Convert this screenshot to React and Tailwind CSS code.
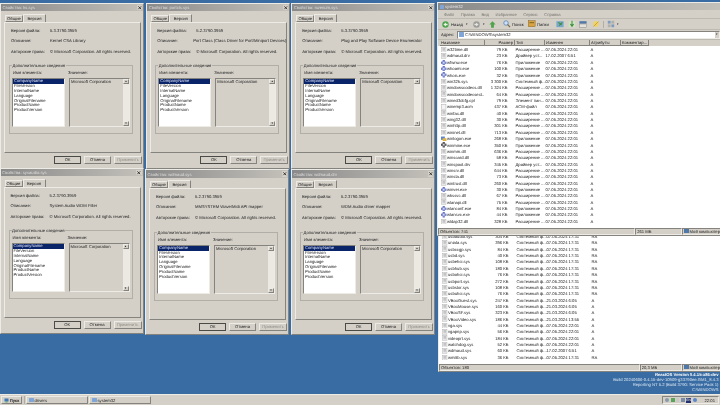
const bevelOut = "border border-t-[#ecebe6] border-l-[#ecebe6] border-r-[#85837d] border-b-[#85837d]";
const bevelIn = "border border-t-[#85837d] border-l-[#85837d] border-r-[#ecebe6] border-b-[#ecebe6]";

const itemNames = ["CompanyName", "FileVersion", "InternalName", "Language", "OriginalFilename", "ProductName", "ProductVersion"];

const dialogs = [
  { file: "ks.sys", ver: "5.3.3790.3959", desc: "Kernel CSA Library", cls: "left-0 top-[2.7px]" },
  { file: "portcls.sys", ver: "5.2.3790.3959", desc: "Port Class (Class Driver for Port/Miniport Devices)", cls: "left-[146.3px] top-[2.7px]" },
  { file: "swenum.sys", ver: "5.3.3790.3959", desc: "Plug and Play Software Device Enumerator", cls: "left-[291.3px] top-[2.7px]" },
  { file: "sysaudio.sys", ver: "5.2.3790.3959", desc: "System Audio WDM Filter", cls: "left-[-0.5px] top-[167.7px]" },
  { file: "wdmaud.sys", ver: "5.2.3790.3959", desc: "MMSYSTEM Wave/Midi API mapper", cls: "left-[145px] top-[169.4px]" },
  { file: "wdmaud.drv", ver: "5.2.3790.3959", desc: "WDM Audio driver mapper", cls: "left-[291px] top-[169.4px]" },
];

const dll = (name, size, type = "Расширение ...", date = "07.05.2024 22:01", attr = "A") => ({ name, size, type, date, attr, icon: "dll" });
const exe = (name, size) => ({ name, size, type: "Приложение", date: "07.05.2024 22:01", attr: "A", icon: "exe" });
const sys = (name, size, date = "07.05.2024 17:31", attr = "RA") => ({ name, size, type: "Системный ф...", date, attr, icon: "dll" });

const topRows = [
  dll("w32time.dll", "79 КБ"),
  dll("wdmaud.drv", "23 КБ", "Драйвер уст...", "17.02.2007 6:51"),
  exe("wfwnw.exe", "76 КБ"),
  exe("whoami.exe", "100 КБ"),
  exe("whois.exe", "32 КБ"),
  dll("win32k.sys", "3 300 КБ", "Системный ф..."),
  dll("windowscodecs.dll", "1 324 КБ"),
  dll("windowscodecsext...", "64 КБ"),
  dll("wined3dcfg.cpl", "79 КБ", "Элемент пан..."),
  { ...dll("winemp3.acm", "437 КБ", "ACM-файл"), icon: "blank" },
  dll("winfax.dll", "40 КБ"),
  dll("wing32.dll", "30 КБ"),
  dll("winhttp.dll", "301 КБ"),
  dll("wininet.dll", "713 КБ"),
  { ...exe("winlogon.exe", "268 КБ"), icon: "logon" },
  { ...exe("winmine.exe", "350 КБ"), icon: "mine" },
  dll("winmm.dll", "636 КБ"),
  dll("winscard.dll", "58 КБ"),
  dll("winspool.drv", "345 КБ", "Драйвер уст..."),
  dll("winsrv.dll", "644 КБ"),
  dll("winsta.dll", "73 КБ"),
  dll("wintrust.dll", "260 КБ"),
  exe("winver.exe", "30 КБ"),
  dll("wkssvc.dll", "67 КБ"),
  dll("wlanapi.dll", "75 КБ"),
  exe("wlanconf.exe", "84 КБ"),
  exe("wlansvc.exe", "44 КБ"),
  dll("wldap32.dll", "328 КБ"),
];

const bottomRows = [
  sys("usbaudio.sys", "304 КБ"),
  sys("uniata.sys", "396 КБ"),
  sys("usbccgp.sys", "84 КБ"),
  sys("usbd.sys", "40 КБ"),
  sys("usbehci.sys", "108 КБ"),
  sys("usbhub.sys", "180 КБ"),
  sys("usbohci.sys", "76 КБ"),
  sys("usbport.sys", "272 КБ"),
  sys("usbstor.sys", "108 КБ"),
  sys("usbuhci.sys", "76 КБ"),
  sys("VBoxGuest.sys", "247 КБ", "21.03.2024 6:05", "A"),
  sys("VBoxMouse.sys", "160 КБ", "21.03.2024 6:05", "A"),
  sys("VBoxSF.sys", "323 КБ", "21.03.2024 6:05", "A"),
  sys("VBoxVideo.sys", "186 КБ", "21.03.2024 13:55", "A"),
  sys("vga.sys", "44 КБ", "07.05.2024 22:01", "A"),
  sys("vgapnp.sys", "56 КБ", "07.05.2024 22:01", "A"),
  sys("videoprt.sys", "184 КБ", "07.05.2024 22:01", "A"),
  sys("watchdog.sys", "52 КБ", "07.05.2024 22:01", "A"),
  sys("wdmaud.sys", "60 КБ", "17.02.2007 6:51", "A"),
  sys("wmilib.sys", "36 КБ"),
];

function FileIcon({ kind }) {
  if (kind === "exe" || kind === "mine")
    return (
      <svg viewBox="0 0 10 10" className="w-[5.5px] h-[5.5px] shrink-0">
        <rect x="3" y="0" width="4" height="10" fill={kind === "mine" ? "#555" : "#6a76c4"} />
        <rect x="0" y="3" width="10" height="4" fill={kind === "mine" ? "#555" : "#6a76c4"} />
        <circle cx="5" cy="5" r="3.4" fill={kind === "mine" ? "#777" : "#8e9ad8"} />
        <circle cx="5" cy="5" r="1.4" fill="#dfe3f5" />
      </svg>
    );
  if (kind === "logon")
    return (
      <svg viewBox="0 0 10 10" className="w-[5.5px] h-[5.5px] shrink-0">
        <rect x="0" y="1" width="7" height="6" fill="#5b85c8" />
        <rect x="3" y="4" width="7" height="6" fill="#e3b341" />
      </svg>
    );
  return (
    <svg viewBox="0 0 10 10" className="w-[5.5px] h-[5.5px] shrink-0">
      <rect x="1" y="0.5" width="8" height="9" fill="#f4f4f4" stroke="#b5b5b5" />
      {kind === "dll" && <rect x="2.5" y="2.5" width="5" height="1" fill="#9a9a9a" />}
      {kind === "dll" && <rect x="2.5" y="4.5" width="5" height="1" fill="#9a9a9a" />}
      {kind === "dll" && <rect x="2.5" y="6.5" width="5" height="1" fill="#9a9a9a" />}
    </svg>
  );
}

function PropDialog({ d }) {
  return (
    <div className={`absolute ${d.cls} w-[144px] h-[166px] bg-[#d4d0c8] ${bevelOut} flex flex-col text-[#222]`}>
      <div className="h-[7.5px] shrink-0 bg-gradient-to-r from-[#8a8a8a] to-[#c4c1ba] flex items-center justify-between pl-[1.5px] pr-[1px]">
        <span className="text-[#dedede]">Свойства: {d.file}</span>
        <svg viewBox="0 0 10 10" className="w-[5.5px] h-[5.5px] bg-[#d4d0c8]">
          <path d="M2.5 2.5 L7.5 7.5 M7.5 2.5 L2.5 7.5" stroke="#222" strokeWidth="1.5" />
        </svg>
      </div>
      <div className="flex pl-[4px] mt-[2.5px] items-end h-[8px] shrink-0">
        <div className={`w-[18px] h-[7px] flex items-center justify-center ${bevelOut}`}>Общие</div>
        <div className={`w-[23px] h-[8px] flex items-center justify-center ${bevelOut} border-b-0`}>Версия</div>
      </div>
      <div className={`ml-[3px] mr-[2px] h-[131.3px] shrink-0 ${bevelOut} pl-[6px] flex flex-col`}>
        <div className="flex mt-[5px] h-[5px] items-center"><span className="w-[39px]">Версия файла:</span><span>{d.ver}</span></div>
        <div className="flex mt-[5px] h-[5px] items-center"><span className="w-[39px]">Описание:</span><span className="whitespace-nowrap">{d.desc}</span></div>
        <div className="flex mt-[6px] h-[5px] items-center whitespace-nowrap"><span className="w-[39px]">Авторские права:</span><span>© Microsoft Corporation. All rights reserved.</span></div>
        <div className="relative mt-[11.3px] h-[69px] w-[124px] -ml-[2px] border border-[#b0aea6] pl-[2px] flex flex-col">
          <span className="absolute left-[2px] -top-[3px] bg-[#d4d0c8] px-[0.5px] leading-[5px]">Дополнительные сведения</span>
          <div className="flex gap-[3px] mt-[4.5px] h-[5px] items-center">
            <span className="w-[53px] pl-[1px]">Имя элемента:</span>
            <span>Значение:</span>
          </div>
          <div className="flex gap-[4px] mt-[2.5px]">
            <div className={`w-[53px] h-[49.5px] bg-white ${bevelIn} flex flex-col`}>
              {itemNames.map((n, i) => (
                <div key={n} className={`h-[4.9px] leading-[4.9px] pl-[1px] ${i === 0 ? "bg-[#0a246a] text-[#dfe4f5]" : ""}`}>{n}</div>
              ))}
            </div>
            <div className={`w-[61px] h-[49.5px] ${bevelIn} flex`}>
              <span className="flex-1 pl-[1px] pt-[0.5px] leading-[5px] whitespace-nowrap">Microsoft Corporation</span>
              <div className="w-[6px] bg-[#ece9e2] flex flex-col justify-between">
                <div className={`h-[5px] bg-[#d4d0c8] ${bevelOut} flex items-center justify-center text-[3px] leading-none`}>▴</div>
                <div className={`h-[5px] bg-[#d4d0c8] ${bevelOut} flex items-center justify-center text-[3px] leading-none`}>▾</div>
              </div>
            </div>
          </div>
        </div>
      </div>
      <div className="flex justify-end gap-[3px] pr-[1px] mt-[3px] h-[8px] shrink-0">
        <div className="w-[27px] flex items-center justify-center border border-[#4a4a46] bg-[#d4d0c8]">ОК</div>
        <div className={`w-[27px] flex items-center justify-center ${bevelOut}`}>Отмена</div>
        <div className={`w-[28px] flex items-center justify-center ${bevelOut} text-[#8f8d87]`}>Применить</div>
      </div>
    </div>
  );
}

function Toolbar() {
  return (
    <div className="h-[11px] shrink-0 flex items-center pl-[4px] border-b border-[#bdbab2] whitespace-nowrap">
      <svg viewBox="0 0 10 10" className="w-[7px] h-[7px] shrink-0"><circle cx="5" cy="5" r="4.6" fill="#4ea44c" /><path d="M5.5 2 L2 5 L5.5 8 V6 H8 V4 H5.5 Z" fill="#e8f3e4" /></svg>
      <span className="w-[12px] ml-[2px]">Назад</span>
      <span className="w-[3px] ml-[3px] text-[3px]">▾</span>
      <svg viewBox="0 0 10 10" className="w-[7px] h-[7px] ml-[4px] shrink-0"><circle cx="5" cy="5" r="4.6" fill="#9a9a96" /><path d="M4.5 2 L8 5 L4.5 8 V6 H2 V4 H4.5 Z" fill="#e4e4e0" /></svg>
      <span className="w-[3px] ml-[3px] text-[3px]">▾</span>
      <svg viewBox="0 0 10 10" className="w-[7px] h-[7px] ml-[3px] shrink-0"><path d="M5 0.5 L9.5 5 H7 V9.5 H3 V5 H0.5 Z" fill="#4ea44c" /></svg>
      <svg viewBox="0 0 10 10" className="w-[7.5px] h-[7.5px] ml-[7px] shrink-0"><circle cx="4" cy="4" r="3" fill="#cfe0f2" stroke="#4f7fb5" /><path d="M6 6 L9.5 9.5" stroke="#7a6a4a" strokeWidth="1.5" /></svg>
      <span className="w-[10px] ml-[1.5px]">Поиск</span>
      <svg viewBox="0 0 10 10" className="w-[7.5px] h-[7.5px] ml-[6px] shrink-0"><rect x="0.5" y="1" width="9" height="8" fill="#d9a441" stroke="#7a5c1e" strokeWidth="0.6" /><rect x="2" y="3" width="6" height="1.2" fill="#7a5c1e" /></svg>
      <span className="w-[11px] ml-[1.5px]">Папки</span>
      <svg viewBox="0 0 10 10" className="w-[8px] h-[8px] ml-[8px] shrink-0"><rect x="0.5" y="1.5" width="9" height="7.5" fill="#78a8c8" /><path d="M3 3 L7 6 M4 7 L8 3" stroke="#3e8e41" strokeWidth="1.4" /></svg>
      <svg viewBox="0 0 10 10" className="w-[8px] h-[8px] ml-[4px] shrink-0"><rect x="1" y="1.5" width="8" height="7.5" fill="#cfe3c0" /><path d="M5 1 V7 M3 5 L5 8 L7 5" stroke="#3e8e41" strokeWidth="1.3" fill="none" /></svg>
      <svg viewBox="0 0 10 10" className="w-[8px] h-[8px] ml-[3px] shrink-0"><rect x="0.5" y="1.5" width="9" height="3" fill="#4f78a8" /><rect x="0.5" y="5" width="9" height="4" fill="#e3e1da" stroke="#777" strokeWidth="0.5" /></svg>
      <svg viewBox="0 0 10 10" className="w-[8px] h-[8px] ml-[5px] shrink-0"><circle cx="5" cy="5" r="3.6" fill="#efd36a" /><path d="M2 8 L8 2" stroke="#c9a22e" strokeWidth="1.2" /></svg>
      <span className="w-px h-[7px] bg-[#b0aea6] ml-[3px]" />
      <svg viewBox="0 0 10 10" className="w-[8px] h-[8px] ml-[3px] shrink-0"><rect x="1" y="1" width="3.5" height="3.5" fill="#7c9cc0" /><rect x="5.5" y="1" width="3.5" height="3.5" fill="#b0b0a8" /><rect x="1" y="5.5" width="3.5" height="3.5" fill="#b0b0a8" /><rect x="5.5" y="5.5" width="3.5" height="3.5" fill="#7c9cc0" /></svg>
      <span className="ml-[2px] text-[3px]">▾</span>
    </div>
  );
}

function ExplorerChrome() {
  const cols = [
    ["Название", "w-[45px]"],
    ["Размер", "w-[30px] justify-end pr-[1px]"],
    ["Тип", "w-[30px]"],
    ["Изменен", "w-[45px]"],
    ["Атрибуты", "w-[31px]"],
    ["Комментар...", "w-[28px]"],
  ];
  return (
    <>
      <div className="h-[7px] shrink-0 bg-gradient-to-r from-[#8a8a8a] to-[#c4c1ba] flex items-center pl-[1.5px] gap-[1px] text-[#e6e6e6]">
        <span className="w-[4.5px] h-[4px] bg-[#7fa6d6] rounded-[0.5px]" />
        system32
      </div>
      <div className="h-[9px] shrink-0 flex items-center gap-[6.5px] pl-[6px] text-[#77756f] border-b border-[#bdbab2]">
        {["Файл", "Правка", "Вид", "Избранное", "Сервис", "Справка"].map((m) => <span key={m}>{m}</span>)}
      </div>
      <Toolbar />
      <div className="h-[10px] shrink-0 flex items-center pl-[3px] pr-[1px] gap-[2px] border-b border-[#bdbab2]">
        <span className="w-[14px]">Адрес:</span>
        <div className={`flex-1 h-[8px] bg-white ${bevelIn} flex items-center gap-[1px] pl-[1px]`}>
          <span className="w-[5px] h-[4.5px] bg-[#7fa6d6] rounded-[0.5px]" />
          C:\WINDOWS\system32
          <span className="ml-auto w-[4.5px] h-full bg-[#d4d0c8] flex items-center justify-center text-[3px]">▾</span>
        </div>
      </div>
      <div className="h-[6px] shrink-0 flex pl-[2px] bg-[#d4d0c8]">
        {cols.map(([t, w]) => (
          <div key={t} className={`${w} flex items-center pl-[1px] ${bevelOut} border-t-0 border-l-0 whitespace-nowrap overflow-hidden`}>{t}</div>
        ))}
      </div>
    </>
  );
}

function Explorer({ cls, rows, objects, bytes, paneCls, bytesCls, covered }) {
  return (
    <div className={`absolute ${cls} bg-[#d4d0c8] ${bevelOut} flex flex-col text-[#222]`}>
      {/* the lower window's chrome sits behind the upper one */}
      {!covered && <ExplorerChrome />}
      <div className="flex-1 min-h-0 bg-white overflow-hidden flex flex-col justify-end pb-[3px]">
        {rows.map((r) => (
          <div key={r.name} className="h-[6.37px] shrink-0 flex items-center pl-[3px] whitespace-nowrap">
            <FileIcon kind={r.icon} />
            <span className="w-[37px] pl-[0.5px] overflow-hidden">{r.name}</span>
            <span className="w-[24px] text-right">{r.size}</span>
            <span className="w-[38px] pl-[8px]">{r.type}</span>
            <span className="w-[45px]">{r.date}</span>
            <span>{r.attr}</span>
          </div>
        ))}
      </div>
      <div className="h-[7px] shrink-0 flex">
        <div className={`${paneCls} ${bevelIn} flex items-center pl-[1px]`}>Объектов: {objects}</div>
        <div className={`${bytesCls} ${bevelIn} flex items-center pl-[1px]`}>{bytes}</div>
        <div className={`flex-1 ${bevelIn} flex items-center gap-[1px] pl-[1px] whitespace-nowrap`}>
          <span className="w-[4.5px] h-[4px] bg-[#4f78a8]" />Мой компьютер
        </div>
      </div>
    </div>
  );
}

export default function App() {
  return (
    <div className="relative w-[720px] h-[405px] overflow-hidden bg-[#386ca3] font-['Liberation_Sans',sans-serif] text-[4.2px] leading-[5px] [text-rendering:geometricPrecision] blur-[0.35px]">
      <div className="absolute right-[1.5px] top-[373.3px] text-right text-white leading-[4.8px] whitespace-nowrap">
        <div className="font-bold">ReactOS Version 0.4.15-x86-dev</div>
        <div className="text-[#dce6f2]">Build 20240606-0.4.15-dev-10909-g33790ee.GM1_8.4.3</div>
        <div className="text-[#dce6f2]">Reporting NT 5.2 (Build 3790: Service Pack 1)</div>
        <div className="text-[#dce6f2]">C:\WINDOWS</div>
      </div>

      {dialogs.map((d) => <PropDialog key={d.file} d={d} />)}

      <Explorer covered cls="left-[438px] top-[235px] w-[284px] h-[136.5px]" rows={bottomRows} objects="180" bytes="20,3 МБ" paneCls="w-[219px]" bytesCls="w-[46px]" />
      <Explorer cls="left-[437px] top-[2px] w-[285px] h-[233.5px]" rows={topRows} objects="741" bytes="261 МБ" paneCls="w-[211px]" bytesCls="w-[50px]" />

      <div className="absolute left-0 right-0 bottom-0 h-[11px] bg-[#d4d0c8] border-t border-[#ecebe6] flex items-center pl-[1px] pr-[1px] gap-[1px] text-[#222]">
        <div className={`w-[21px] h-[8px] ${bevelOut} flex items-center justify-center gap-[1px]`}>
          <svg viewBox="0 0 10 10" className="w-[5px] h-[5px]">
            <rect x="1" y="1" width="8" height="6" fill="#3f78b8" />
            <rect x="3" y="7" width="4" height="2" fill="#5aa35a" />
          </svg>
          <span className="font-bold">Пуск</span>
        </div>
        <span className="w-px h-[8px] bg-[#b0aea6] ml-[1px]" />
        {["drivers", "system32"].map((t) => (
          <div key={t} className={`w-[62px] h-[8px] ${bevelOut} flex items-center gap-[1px] pl-[1.5px]`}>
            <span className="w-[5px] h-[4.5px] bg-[#7fa6d6] rounded-[0.5px]" />
            {t}
          </div>
        ))}
        <div className={`ml-auto w-[57px] h-[8px] ${bevelIn} flex items-center gap-[1.5px] pl-[2px]`}>
          <span className="w-[4px] h-[4px] bg-[#8a9aa8] rounded-full" />
          <span className="w-[4px] h-[4px] bg-[#5aa35a]" />
          <span className="w-[3px] h-[4px] bg-[#c8c8c4]" />
          <span className="w-[4px] h-[4px] bg-[#7c8ca4]" />
          <span className="w-[5px] h-[5px] bg-[#22306e] text-white flex items-center justify-center text-[3.4px]">EN</span>
          <span className="w-[4px] h-[4px] bg-[#5b85c8] rounded-full" />
          <span className="ml-auto pr-[3px]">22:01</span>
        </div>
      </div>
    </div>
  );
}
